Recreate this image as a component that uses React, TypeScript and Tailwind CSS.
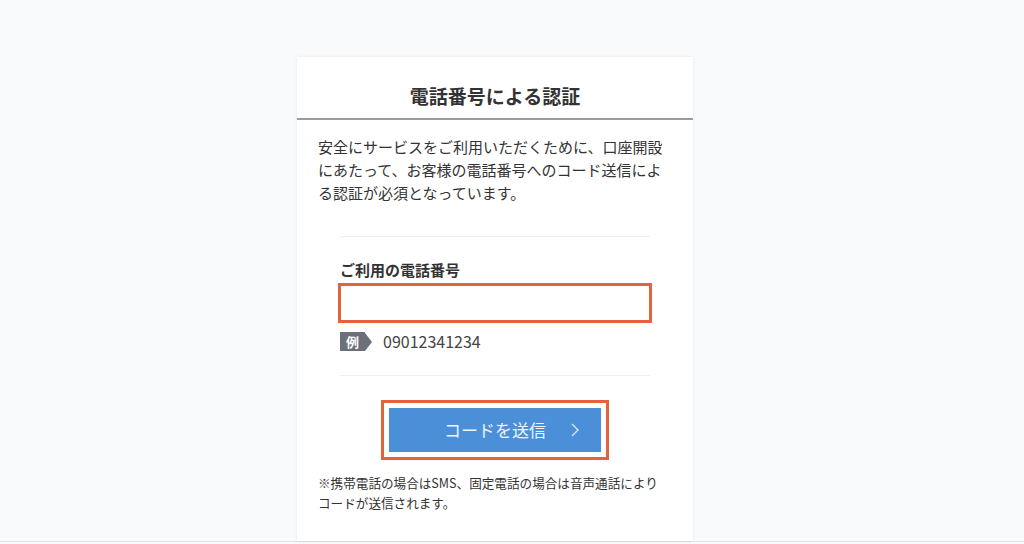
import React from "react";

export default function App() {
  return (
    <div
      className="w-full h-[544px] bg-[#f9fafc] overflow-hidden"
      style={{ fontFamily: '"Noto Sans CJK JP", "Noto Sans", sans-serif' }}
    >
      <div className="h-[542px] border-b border-[#dfe1e5] flex justify-center pt-[57px] pr-[34px]">
        <div className="w-[396px] bg-white shadow-[0_0_3px_rgba(0,0,0,0.08)] flex flex-col">
          {/* Header */}
          <div className="h-[63px] border-b-2 border-[#9a9a9a] pt-[27px] text-center">
            <h1 className="text-[19px] leading-[24px] font-bold text-[#333]">
              電話番号による認証
            </h1>
          </div>

          {/* Body */}
          <div className="px-[21px] pt-[15px]">
            <p className="text-[15px] leading-[23px] text-[#333]">
              安全にサービスをご利用いただくために、口座開設にあたって、お客様の電話番号へのコード送信による認証が必須となっています。
            </p>

            <div className="mx-[22px] mt-[32px] border-t border-[#eeeff1] pt-[23px]">
              <label className="block text-[15px] leading-[20px] font-bold text-[#333]">
                ご利用の電話番号
              </label>
              <input
                type="text"
                className="block mt-[3px] -mx-[2px] w-[calc(100%+4px)] h-[40px] border-[3px] border-[#e2643c] outline-none px-2"
              />
              <div className="flex items-center mt-[9px] h-[19px]">
                <div className="flex items-center">
                  <div className="w-[25px] h-[19px] bg-[#6c707a] text-white text-[13px] font-bold leading-[19px] text-center">
                    例
                  </div>
                  <div className="w-0 h-0 border-y-[9.5px] border-y-transparent border-l-[7px] border-l-[#6c707a]" />
                </div>
                <span className="ml-[11px] text-[16px] text-[#444] leading-[19px]">
                  09012341234
                </span>
              </div>

              <div className="mt-[24px] border-t border-[#eeeff1]" />
            </div>

            <div className="flex justify-center mt-[24px]">
              <div className="border-[3px] border-[#e2643c] p-[5px] bg-white">
                <button className="relative w-[212px] h-[44px] bg-[#4a8fd8] text-[#eef4fb] text-[17px] flex items-center justify-center">
                  コードを送信
                  <svg
                    className="absolute right-[22px] top-1/2 -translate-y-1/2"
                    width="8"
                    height="14"
                    viewBox="0 0 8 14"
                    fill="none"
                  >
                    <polyline
                      points="1,1 7,7 1,13"
                      stroke="#d6e6f7"
                      strokeWidth="1.4"
                    />
                  </svg>
                </button>
              </div>
            </div>

            <p className="mt-[13px] text-[12.6px] leading-[20px] text-[#333]">
              ※携帯電話の場合はSMS、固定電話の場合は音声通話により
              <br />
              コードが送信されます。
            </p>
          </div>
        </div>
      </div>
    </div>
  );
}
